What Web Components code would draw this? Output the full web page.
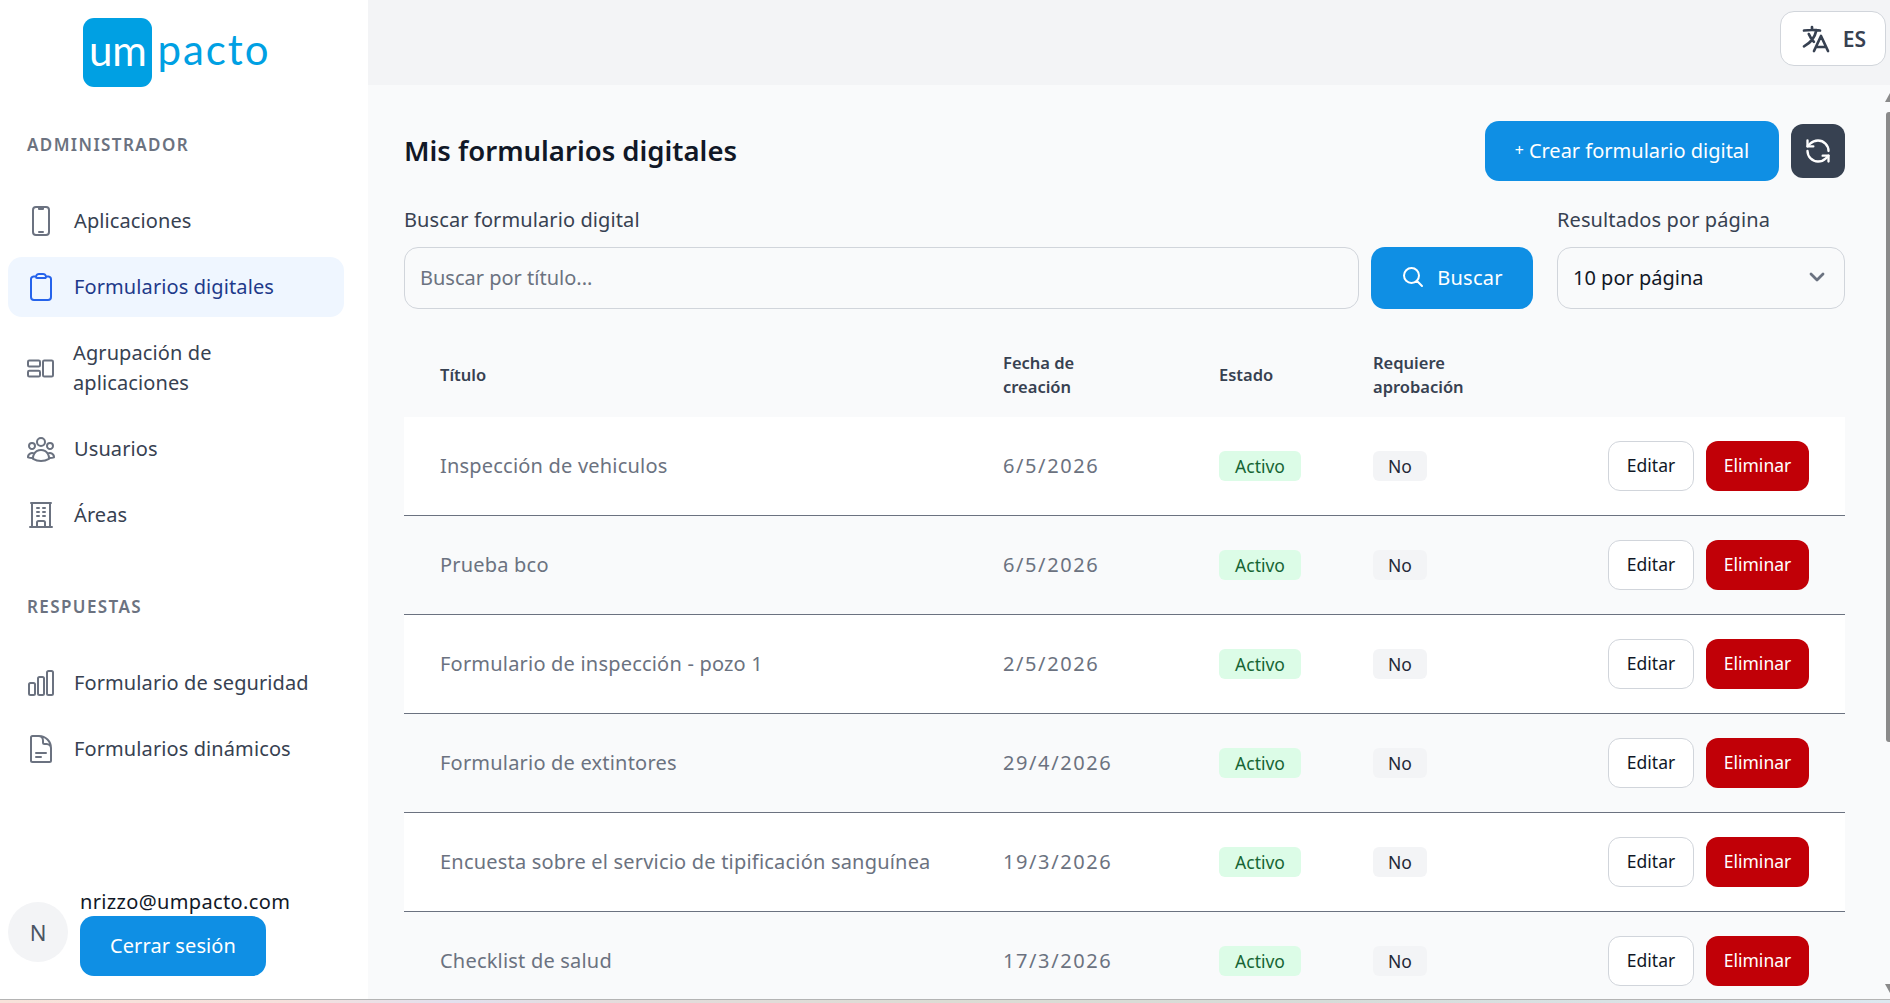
<!DOCTYPE html>
<html lang="es">
<head>
<meta charset="utf-8">
<title>Mis formularios digitales</title>
<style>
  html, body { margin: 0; height: 100%; overflow: hidden; }
  body { font-family: "Noto Sans", "Liberation Sans", sans-serif; display: flex; flex-direction: column; }
  app-shell { flex: 1; min-height: 0; }
  desk-strip { flex: none; }
</style>
</head>
<body>
<app-shell>
  <side-bar slot="side"></side-bar>
  <top-bar slot="top"></top-bar>
  <forms-page slot="page"></forms-page>
</app-shell>
<desk-strip></desk-strip>

<script>
const ICONS = {
    phone: '<path d="M10.5 1.5H8.25A2.25 2.25 0 0 0 6 3.75v16.5a2.25 2.25 0 0 0 2.25 2.25h7.5A2.25 2.25 0 0 0 18 20.25V3.75a2.25 2.25 0 0 0-2.25-2.25H13.5m-3 0V3h3V1.5m-3 0h3m-3 18.75h3"/>',
    clipboard: '<path d="M15.666 3.888A2.25 2.25 0 0 0 13.5 2.25h-3c-1.03 0-1.9.693-2.166 1.638m7.332 0c.055.194.084.4.084.612v0a.75.75 0 0 1-.75.75H9a.75.75 0 0 1-.75-.75v0c0-.212.03-.418.084-.612m7.332 0c.646.049 1.288.11 1.927.184 1.1.128 1.907 1.077 1.907 2.185V19.5a2.25 2.25 0 0 1-2.25 2.25H6.75A2.25 2.25 0 0 1 4.5 19.5V6.257c0-1.108.806-2.057 1.907-2.185a48.208 48.208 0 0 1 1.927-.184"/>',
    group: '<rect x="2.25" y="6.4" width="9" height="4.5" rx="1"/><rect x="2.25" y="14" width="9" height="4.4" rx="1"/><rect x="13.5" y="6.4" width="7.5" height="12" rx="1"/>',
    users: '<path d="M18 18.72a9.094 9.094 0 0 0 3.741-.479 3 3 0 0 0-4.682-2.72m.94 3.198.001.031c0 .225-.012.447-.037.666A11.944 11.944 0 0 1 12 21c-2.17 0-4.207-.576-5.963-1.584A6.062 6.062 0 0 1 6 18.719m12 0a5.971 5.971 0 0 0-.941-3.197m0 0A5.995 5.995 0 0 0 12 12.75a5.995 5.995 0 0 0-5.058 2.772m0 0a3 3 0 0 0-4.681 2.72 8.986 8.986 0 0 0 3.74.477m.94-3.197a5.971 5.971 0 0 0-.94 3.197M15 6.75a3 3 0 1 1-6 0 3 3 0 0 1 6 0Zm6 3a2.25 2.25 0 1 1-4.5 0 2.25 2.25 0 0 1 4.5 0Zm-13.5 0a2.25 2.25 0 1 1-4.5 0 2.25 2.25 0 0 1 4.5 0Z"/>',
    building: '<path d="M3.75 21h16.5M4.5 3h15M5.25 3v18m13.5-18v18M9 6.75h1.5m-1.5 3h1.5m-1.5 3h1.5m3-6H15m-1.5 3H15m-1.5 3H15M9 21v-3.375c0-.621.504-1.125 1.125-1.125h3.75c.621 0 1.125.504 1.125 1.125V21"/>',
    chart: '<path d="M3 13.125C3 12.504 3.504 12 4.125 12h2.25c.621 0 1.125.504 1.125 1.125v6.75C7.5 20.496 6.996 21 6.375 21h-2.25A1.125 1.125 0 0 1 3 19.875v-6.75ZM9.75 8.625c0-.621.504-1.125 1.125-1.125h2.25c.621 0 1.125.504 1.125 1.125v11.25c0 .621-.504 1.125-1.125 1.125h-2.25a1.125 1.125 0 0 1-1.125-1.125V8.625ZM16.5 4.125c0-.621.504-1.125 1.125-1.125h2.25C20.496 3 21 3.504 21 4.125v15.75c0 .621-.504 1.125-1.125 1.125h-2.25a1.125 1.125 0 0 1-1.125-1.125V4.125Z"/>',
    doc: '<path d="M19.5 14.25v-2.625a3.375 3.375 0 0 0-3.375-3.375h-1.5A1.125 1.125 0 0 1 13.5 7.125v-1.5a3.375 3.375 0 0 0-3.375-3.375H8.25m0 12.75h7.5m-7.5 3H12M10.5 2.25H5.625c-.621 0-1.125.504-1.125 1.125v17.25c0 .621.504 1.125 1.125 1.125h12.75c.621 0 1.125-.504 1.125-1.125V11.25a9 9 0 0 0-9-9Z"/>',
    language: '<path d="m10.5 21 5.25-11.25L21 21m-9-3h7.5M3 5.621a48.474 48.474 0 0 1 6-.371m0 0c1.12 0 2.233.038 3.334.114M9 5.25V3m3.334 2.364C11.176 10.658 7.69 15.08 3 17.502m9.334-12.138c.896.061 1.785.147 2.666.257m-4.589 8.495a18.023 18.023 0 0 1-3.827-5.802"/>',
    refresh: '<path d="M21 12a9 9 0 0 0-9-9 9.75 9.75 0 0 0-6.74 2.74L3 8"/><path d="M3 3v5h5"/><path d="M3 12a9 9 0 0 0 9 9 9.75 9.75 0 0 0 6.74-2.74L21 16"/><path d="M16 16h5v5"/>',
    search: '<path d="m21 21-5.197-5.197m0 0A7.5 7.5 0 1 0 5.196 5.196a7.5 7.5 0 0 0 10.607 10.607Z"/>',
    chevron: '<path d="m6 9 6 6 6-6"/>',
};

function icon(name, size, width = 1.5) {
    return `<svg width="${size}" height="${size}" viewBox="0 0 24 24" fill="none" stroke="currentColor" stroke-width="${width}" stroke-linecap="round" stroke-linejoin="round">${ICONS[name]}</svg>`;
}

class AppShell extends HTMLElement {
    constructor() {
        super();
        this.attachShadow({ mode: 'open' });
    }

    connectedCallback() {
        this.shadowRoot.innerHTML = `
      <style>
        :host { display: flex; height: 100%; min-height: 0; background: #f9fafb; }
        .side { flex: none; width: 368px; display: flex; }
        .right { flex: 1; min-width: 0; display: flex; flex-direction: column; position: relative; }
        .page { flex: 1; min-height: 0; overflow: hidden; display: flex; }
        .bar { position: absolute; right: 0; top: 93px; bottom: 6px; width: 5px; }
        .up, .down { position: absolute; right: 0; width: 0; height: 0; border-left: 5px solid transparent; }
        .up { top: 0; border-bottom: 9px solid #8a8a8a; }
        .down { bottom: 0; border-top: 9px solid #8a8a8a; }
        .thumb { position: absolute; right: 0; top: 19px; width: 4px; height: 630px; background: #8a8a8a; border-radius: 3px 0 0 3px; }
      </style>
      <div class="side"><slot name="side"></slot></div>
      <div class="right">
        <slot name="top"></slot>
        <div class="page"><slot name="page"></slot></div>
        <div class="bar"><div class="up"></div><div class="thumb"></div><div class="down"></div></div>
      </div>
    `;
    }
}

class NavItem extends HTMLElement {
    constructor() {
        super();
        this.attachShadow({ mode: 'open' });
    }

    connectedCallback() {
        this.shadowRoot.innerHTML = `
      <style>
        :host { display: flex; align-items: center; gap: 17px; min-height: 60px; margin: 0 24px 6px 8px; padding: 0 17px; border-radius: 14px; color: #374151; font-size: 20px; letter-spacing: .1px; line-height: 30px; }
        :host([two]) { padding-top: 15px; padding-bottom: 15px; gap: 16px; }
        :host([active]) { background: #eff6ff; color: #1e3a8a; }
        svg { flex: none; display: block; color: #6b7280; }
        :host([active]) svg { color: #2563eb; }
      </style>
      ${icon(this.getAttribute('icon'), 32)}
      <span><slot></slot></span>
    `;
    }
}

class SideBar extends HTMLElement {
    constructor() {
        super();
        this.attachShadow({ mode: 'open' });
    }

    connectedCallback() {
        this.shadowRoot.innerHTML = `
      <style>
        :host { display: flex; flex-direction: column; width: 368px; height: 100%; background: #fff; }
        .logo { height: 133px; padding: 18px 14px 0 0; box-sizing: border-box; display: flex; justify-content: center; align-items: flex-start; gap: 5px; font-family: "Lato", sans-serif; font-weight: 400; font-size: 42px; }
        .mark { width: 69px; height: 69px; box-sizing: border-box; padding-bottom: 5px; border-radius: 11px; background: #00a0e3; color: #fff; display: flex; align-items: center; justify-content: center; line-height: 1; }
        .word { color: #00a0e3; line-height: 62px; letter-spacing: 2px; }
        h3 { margin: 0 0 34px; padding-left: 27px; font-size: 17px; line-height: 24px; font-weight: 600; color: #6b7280; letter-spacing: 1.4px; }
        .second { margin-top: 44px; margin-bottom: 34px; }
        .user { margin-top: auto; padding: 0 0 23px 8px; display: flex; align-items: center; gap: 12px; }
        .avatar { width: 60px; height: 60px; border-radius: 50%; background: #f3f4f6; color: #4b5563; display: flex; align-items: center; justify-content: center; font-size: 22px; }
        .mail { color: #111827; font-size: 20px; letter-spacing: .35px; line-height: 28px; }
        .out { width: 186px; height: 60px; box-sizing: border-box; padding-bottom: 2px; border-radius: 14px; background: #0f8fe4; color: #fff; display: flex; align-items: center; justify-content: center; font-size: 20px; letter-spacing: .1px; }
      </style>
      <div class="logo"><div class="mark">um</div><div class="word">pacto</div></div>
      <h3>ADMINISTRADOR</h3>
      <nav-item icon="phone">Aplicaciones</nav-item>
      <nav-item icon="clipboard" active>Formularios digitales</nav-item>
      <nav-item icon="group" two>Agrupación de<br>aplicaciones</nav-item>
      <nav-item icon="users">Usuarios</nav-item>
      <nav-item icon="building">Áreas</nav-item>
      <h3 class="second">RESPUESTAS</h3>
      <nav-item icon="chart">Formulario de seguridad</nav-item>
      <nav-item icon="doc">Formularios dinámicos</nav-item>
      <div class="user">
        <div class="avatar">N</div>
        <div>
          <div class="mail">nrizzo@umpacto.com</div>
          <div class="out">Cerrar sesión</div>
        </div>
      </div>
    `;
    }
}

class TopBar extends HTMLElement {
    constructor() {
        super();
        this.attachShadow({ mode: 'open' });
    }

    connectedCallback() {
        this.shadowRoot.innerHTML = `
      <style>
        :host { display: flex; flex: none; justify-content: flex-end; align-items: flex-start; height: 85px; padding: 11px 4px 0 0; box-sizing: border-box; background: #f3f4f6; }
        .lang { width: 106px; height: 55px; box-sizing: border-box; border: 1px solid #d1d5db; border-radius: 14px; background: #fff; display: flex; align-items: center; justify-content: center; gap: 11px; color: #374151; font-size: 21px; font-weight: 600; }
        svg { display: block; }
      </style>
      <div class="lang">${icon('language', 32, 2)}<span>ES</span></div>
    `;
    }
}

class FormRow extends HTMLElement {
    constructor() {
        super();
        this.attachShadow({ mode: 'open' });
    }

    connectedCallback() {
        this.shadowRoot.innerHTML = `
      <style>
        :host { display: grid; grid-template-columns: 563px 216px 154px 1fr auto; align-items: center; flex: none; height: 99px; box-sizing: border-box; padding: 0 36px; border-bottom: 1px solid #6b7280; color: #6b7280; font-size: 20px; letter-spacing: .2px; }
        :host(:nth-child(odd)) { background: #fff; }
        .txt { padding-bottom: 2px; }
        .date { letter-spacing: 1.6px; }
        .badge { display: inline-flex; align-items: center; justify-content: center; height: 30px; border-radius: 6px; font-size: 17.5px; letter-spacing: 0; }
        .on { width: 82px; background: #dcfce7; color: #166534; }
        .no { width: 54px; background: #f3f4f6; color: #1f2937; }
        .acts { display: flex; gap: 12px; font-size: 17.5px; letter-spacing: 0; }
        .btn { height: 50px; box-sizing: border-box; padding-bottom: 2px; border-radius: 12px; display: flex; align-items: center; justify-content: center; }
        .edit { width: 86px; background: #fff; border: 1px solid #d1d5db; color: #111827; }
        .del { width: 103px; background: #c10007; color: #fff; }
      </style>
      <div class="txt">${this.getAttribute('name')}</div>
      <div class="txt date">${this.getAttribute('date')}</div>
      <div><span class="badge on">Activo</span></div>
      <div><span class="badge no">No</span></div>
      <div class="acts"><div class="btn edit">Editar</div><div class="btn del">Eliminar</div></div>
    `;
    }
}

class FormsPage extends HTMLElement {
    constructor() {
        super();
        this.attachShadow({ mode: 'open' });
    }

    connectedCallback() {
        const rows = [
            ['Inspección de vehiculos', '6/5/2026'],
            ['Prueba bco', '6/5/2026'],
            ['Formulario de inspección - pozo 1', '2/5/2026'],
            ['Formulario de extintores', '29/4/2026'],
            ['Encuesta sobre el servicio de tipificación sanguínea', '19/3/2026'],
            ['Checklist de salud', '17/3/2026'],
        ];
        this.shadowRoot.innerHTML = `
      <style>
        :host { display: block; flex: 1; min-width: 0; padding: 36px 45px 0 36px; }
        .head { display: flex; align-items: center; height: 60px; }
        h1 { margin: 0 0 2px; flex: 1; font-size: 27.5px; font-weight: 600; color: #111827; }
        .create { width: 294px; height: 60px; box-sizing: border-box; padding-bottom: 2px; border-radius: 14px; background: #0f8fe4; color: #fff; display: flex; align-items: center; justify-content: center; gap: 5px; font-size: 20px; }
        .create small { font-size: 16px; }
        .sync { width: 54px; height: 54px; margin-left: 12px; border-radius: 12px; background: #374151; color: #fff; display: flex; align-items: center; justify-content: center; }
        .filters { display: grid; grid-template-columns: 1fr 162px 300px; column-gap: 12px; margin-top: 27px; }
        .filters label { display: block; margin-bottom: 15px; font-size: 20px; letter-spacing: .1px; line-height: 24px; color: #374151; }
        .perpage { margin-left: 12px; }
        .field { height: 62px; box-sizing: border-box; border: 1px solid #d1d5db; border-radius: 14px; padding: 0 15px 2px; display: flex; align-items: center; justify-content: space-between; font-size: 20px; }
        .ph { color: #6b7280; }
        .val { color: #111827; }
        .field svg { color: #6b7280; }
        .go { align-self: end; height: 62px; box-sizing: border-box; padding-bottom: 2px; border-radius: 14px; background: #0f8fe4; color: #fff; display: flex; align-items: center; justify-content: center; gap: 12px; font-size: 20px; letter-spacing: .25px; }
        .cols { display: grid; grid-template-columns: 563px 216px 154px 1fr; align-items: center; height: 84px; margin-top: 24px; padding: 0 36px; font-size: 16.5px; line-height: 24px; font-weight: 600; color: #374151; }
        .rows { display: flex; flex-direction: column; }
      </style>
      <div class="head">
        <h1>Mis formularios digitales</h1>
        <div class="create"><small>+</small><span>Crear formulario digital</span></div>
        <div class="sync">${icon('refresh', 28, 2)}</div>
      </div>
      <div class="filters">
        <div>
          <label>Buscar formulario digital</label>
          <div class="field"><span class="ph">Buscar por título...</span></div>
        </div>
        <div class="go">${icon('search', 24, 2)}<span>Buscar</span></div>
        <div class="perpage">
          <label>Resultados por página</label>
          <div class="field"><span class="val">10 por página</span>${icon('chevron', 24, 2.8)}</div>
        </div>
      </div>
      <div class="cols">
        <div>Título</div>
        <div>Fecha de<br>creación</div>
        <div>Estado</div>
        <div>Requiere<br>aprobación</div>
      </div>
      <div class="rows">
        ${rows.map(([name, date]) => `<form-row name="${name}" date="${date}"></form-row>`).join('')}
      </div>
    `;
    }
}

class DeskStrip extends HTMLElement {
    constructor() {
        super();
        this.attachShadow({ mode: 'open' });
    }

    connectedCallback() {
        this.shadowRoot.innerHTML = `
      <style>
        :host { display: block; height: 3px; border-top: 1px solid #b4b4b4; background: linear-gradient(90deg, #f8e2da 0%, #f6e0dc 15%, #e2e0ee 24%, #e4dcdc 32%, #dcdcd4 50%, #d6dcd8 70%, #dce8f0 100%); }
      </style>
    `;
    }
}

customElements.define('nav-item', NavItem);
customElements.define('side-bar', SideBar);
customElements.define('top-bar', TopBar);
customElements.define('form-row', FormRow);
customElements.define('forms-page', FormsPage);
customElements.define('desk-strip', DeskStrip);
customElements.define('app-shell', AppShell);
</script>
</body>
</html>
